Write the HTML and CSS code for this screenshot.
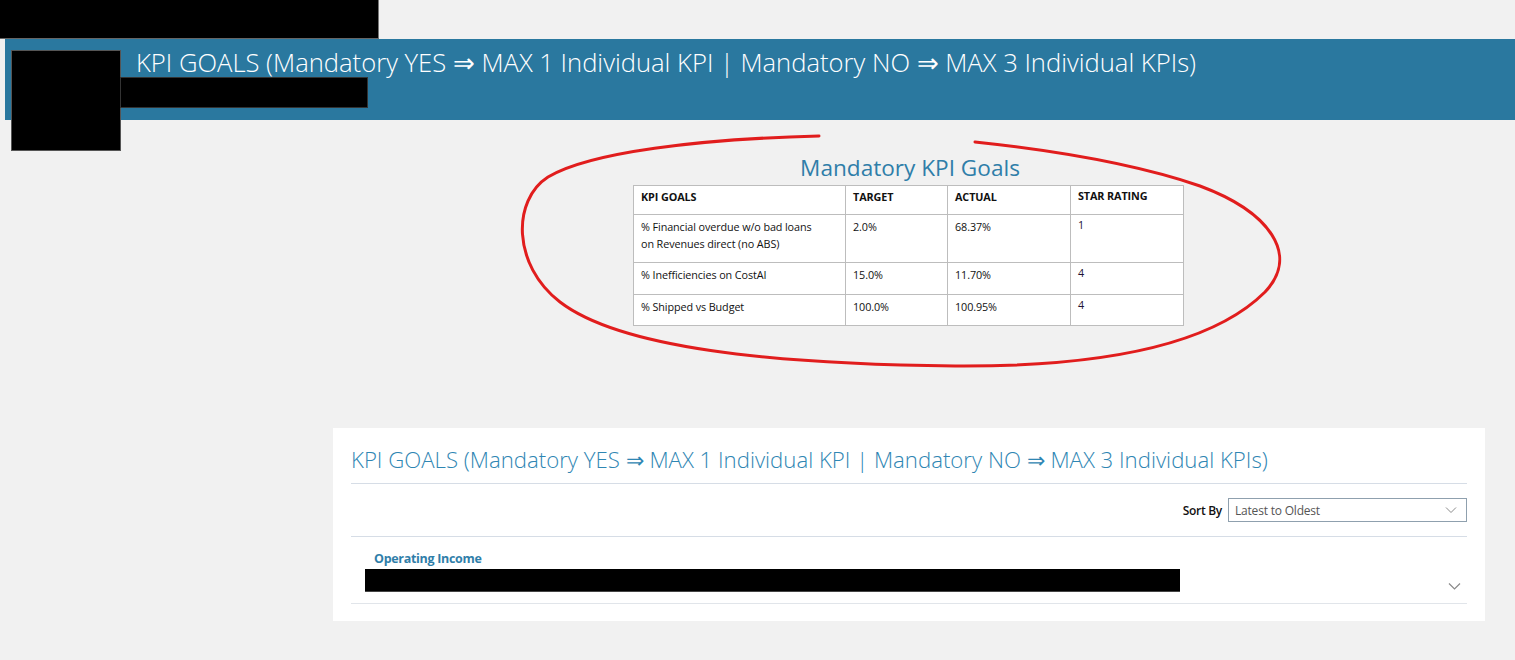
FILE: index.html
```html
<!DOCTYPE html>
<html>
<head>
<meta charset="utf-8">
<link rel="stylesheet" href="styles.css">
</head>
<body>
<div class="topbar"></div>
<header class="band">
  <h1 class="band-title">KPI GOALS (Mandatory YES ⇒ MAX 1 Individual KPI | Mandatory NO ⇒ MAX 3 Individual KPIs)</h1>
  <div class="redact-square"></div>
  <div class="redact-bar"></div>
</header>

<section class="goals">
  <h2 class="goals-title">Mandatory KPI Goals</h2>
  <table class="goals-table">
    <colgroup>
      <col class="c1"><col class="c2"><col class="c3"><col class="c4">
    </colgroup>
    <tr class="r0"><th class="kpi">KPI GOALS</th><th>TARGET</th><th>ACTUAL</th><th class="star">STAR RATING</th></tr>
    <tr class="r1"><td class="kpi">% Financial overdue w/o bad loans on Revenues direct (no ABS)</td><td>2.0%</td><td>68.37%</td><td class="star">1</td></tr>
    <tr class="r2"><td class="kpi">% Inefficiencies on CostAI</td><td>15.0%</td><td>11.70%</td><td class="star">4</td></tr>
    <tr class="r3"><td class="kpi">% Shipped vs Budget</td><td>100.0%</td><td>100.95%</td><td class="star">4</td></tr>
  </table>
  <svg class="circle" width="1515" height="400" viewBox="0 0 1515 400">
    <path d="M 819 16 C 700 19, 590 32, 548 57 C 512 80, 512 145, 560 182 C 620 228, 770 244, 955 246 C 1110 247, 1215 222, 1265 172 C 1300 135, 1270 92, 1200 66 C 1130 42, 1050 30, 975 22" fill="none" stroke="#e11d1d" stroke-width="3" stroke-linecap="round"/>
  </svg>
</section>

<section class="card">
  <h2 class="card-title">KPI GOALS (Mandatory YES ⇒ MAX 1 Individual KPI | Mandatory NO ⇒ MAX 3 Individual KPIs)</h2>
  <div class="sort-row">
    <span class="sort-label">Sort By</span>
    <div class="select">
      <span>Latest to Oldest</span>
      <svg width="12" height="8" viewBox="0 0 12 8"><path d="M1 1.5 L6 6.5 L11 1.5" fill="none" stroke="#8a8a8a" stroke-width="1"/></svg>
    </div>
  </div>
  <div class="item">
    <div class="item-title">Operating Income</div>
    <div class="item-row">
      <div class="item-redact"></div>
      <svg class="item-chev" width="13" height="8" viewBox="0 0 13 8"><path d="M1 1.5 L6.5 7 L12 1.5" fill="none" stroke="#8a8a8a" stroke-width="1.2"/></svg>
    </div>
  </div>
</section>
</body>
</html>
```

FILE: styles.css
```css
html, body {
  margin: 0;
  padding: 0;
  background: #f1f1f1;
  font-family: "Open Sans", "Noto Sans", sans-serif;
  width: 1515px;
  height: 660px;
  overflow: hidden;
}

.topbar {
  width: 379px;
  height: 39px;
  background: #000;
  border-right: 1px solid #777;
  border-bottom: 1px solid #666;
  box-sizing: border-box;
}

.band {
  position: relative;
  margin-left: 5px;
  height: 81px;
  background: #2a789f;
  padding-left: 131px;
  box-sizing: border-box;
}

.band-title {
  margin: 0;
  padding-top: 6px;
  font-weight: 300;
  font-size: 25.6px;
  line-height: 36px;
  color: #fff;
  letter-spacing: 0;
  white-space: nowrap;
}

.redact-square {
  position: absolute;
  left: 6px;
  top: 11px;
  width: 110px;
  height: 101px;
  background: #000;
  border: 1px solid #555;
  box-sizing: border-box;
}

.redact-bar {
  position: absolute;
  left: 115px;
  top: 38px;
  width: 248px;
  height: 31px;
  background: #000;
  border: 1px solid #333;
  box-sizing: border-box;
}

.goals {
  position: relative;
  padding-left: 633px;
  padding-top: 33px;
  height: 275px;
  box-sizing: border-box;
}

.goals-title {
  width: 550px;
  margin: 0;
  text-align: center;
  font-weight: 400;
  font-size: 22.6px;
  line-height: 32px;
  color: #2f7ea9;
  letter-spacing: 0;
  position: relative;
  left: 2px;
  top: -1px;
}

.goals-table {
  border-collapse: collapse;
  width: 551px;
  background: #fff;
  font-family: "Open Sans", "Noto Sans", sans-serif;
  font-size: 10.8px;
  color: #111;
  letter-spacing: -0.1px;
  position: relative;
  z-index: 1;
}

.c1 { width: 212px; }
.c2 { width: 102px; }
.c3 { width: 123px; }
.c4 { width: 113px; }

.goals-table th,
.goals-table td {
  border: 1px solid #bdbdbd;
  text-align: left;
  vertical-align: top;
  padding: 2px 7px 0 7px;
  line-height: 17px;
}

.goals-table td.kpi { padding-right: 22px; }

.goals-table th {
  font-weight: 700;
  padding-top: 2px;
}

.goals-table th.star { padding-top: 1px; }

.r0 { height: 29px; }
.r1 { height: 48px; }
.r2 { height: 32px; }
.r3 { height: 31px; }

.goals-table td { padding-top: 3px; }
.goals-table td.star { padding-top: 1px; color: #221133; }

.circle {
  position: absolute;
  left: 0;
  top: 0;
  pointer-events: none;
}

.card {
  margin-left: 333px;
  margin-top: 33px;
  width: 1152px;
  height: 193px;
  background: #fff;
  padding: 0 18px;
  box-sizing: border-box;
}

.card-title {
  margin: 0;
  padding-top: 17px;
  height: 56px;
  box-sizing: border-box;
  font-weight: 300;
  font-size: 22.2px;
  line-height: 30px;
  color: #2f86b3;
  letter-spacing: 0;
  white-space: nowrap;
  border-bottom: 1px solid #d6dde6;
}

.sort-row {
  display: flex;
  justify-content: flex-end;
  align-items: center;
  gap: 6px;
  height: 52px;
  border-bottom: 1px solid #d6dde6;
}

.sort-label {
  font-size: 12px;
  font-weight: 600;
  color: #111;
  letter-spacing: -0.3px;
}

.select {
  width: 239px;
  height: 24px;
  border: 1px solid #8fa0ae;
  box-sizing: border-box;
  display: flex;
  align-items: center;
  justify-content: space-between;
  padding: 0 9px 0 6px;
  font-size: 12px;
  color: #555;
  letter-spacing: -0.2px;
}

.item {
  height: 67px;
  border-bottom: 1px solid #e1e5ea;
  box-sizing: border-box;
  padding-left: 14px;
  padding-top: 13px;
}

.item-title {
  padding-left: 9px;
  font-size: 12.5px;
  font-weight: 700;
  color: #2f7ea9;
  letter-spacing: -0.3px;
  line-height: 17px;
}

.item-row {
  display: flex;
  justify-content: space-between;
  align-items: flex-start;
}

.item-redact {
  width: 815px;
  height: 22px;
  background: #000;
  margin-top: 2px;
  border-bottom: 1px solid #444;
}

.item-chev {
  margin-top: 15px;
  margin-right: 6px;
}
```
